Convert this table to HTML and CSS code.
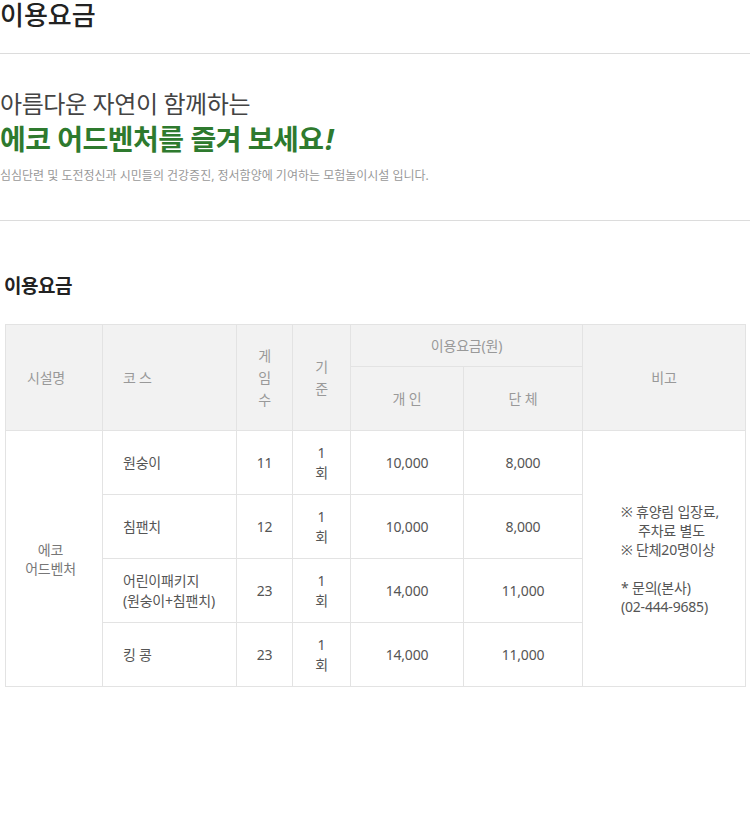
FILE: index.html
```html
<!DOCTYPE html>
<html lang="ko">
<head>
  <meta charset="UTF-8">
  <meta name="viewport" content="width=device-width, initial-scale=1.0">
  <title>이용요금</title>
  <link rel="stylesheet" href="styles.css">
</head>
<body>
  <div class="page">
    <h1 class="page-title">이용요금</h1>

    <div class="intro">
      <p class="intro-lead">아름다운 자연이 함께하는</p>
      <p class="intro-main">에코 어드벤처를 즐겨 보세요<span class="bang">!</span></p>
      <p class="intro-desc">심심단련 및 도전정신과 시민들의 건강증진, 정서함양에 기여하는 모험놀이시설 입니다.</p>
    </div>

    <h3 class="sub-title">이용요금</h3>

    <table class="fee-table">
      <colgroup>
        <col class="c-name">
        <col class="c-course">
        <col class="c-game">
        <col class="c-base">
        <col class="c-price">
        <col class="c-price2">
        <col class="c-note">
      </colgroup>
      <thead>
        <tr class="head-top">
          <th rowspan="2" class="th-name">시설명</th>
          <th rowspan="2" class="th-course">코 스</th>
          <th rowspan="2">게<br>임<br>수</th>
          <th rowspan="2">기<br>준</th>
          <th colspan="2">이용요금(원)</th>
          <th rowspan="2">비고</th>
        </tr>
        <tr class="head-bottom">
          <th>개 인</th>
          <th>단 체</th>
        </tr>
      </thead>
      <tbody>
        <tr>
          <td rowspan="4" class="td-name">에코<br>어드벤처</td>
          <td class="td-course">원숭이</td>
          <td>11</td>
          <td>1<br>회</td>
          <td>10,000</td>
          <td>8,000</td>
          <td rowspan="4" class="td-note">
            ※ 휴양림 입장료,<br>
            <span class="indent">주차료 별도</span><br>
            ※ 단체20명이상<br>
            <br>
            * 문의(본사)<br>
            (02-444-9685)
          </td>
        </tr>
        <tr>
          <td class="td-course">침팬치</td>
          <td>12</td>
          <td>1<br>회</td>
          <td>10,000</td>
          <td>8,000</td>
        </tr>
        <tr>
          <td class="td-course">어린이패키지<br>(원숭이+침팬치)</td>
          <td>23</td>
          <td>1<br>회</td>
          <td>14,000</td>
          <td>11,000</td>
        </tr>
        <tr>
          <td class="td-course">킹 콩</td>
          <td>23</td>
          <td>1<br>회</td>
          <td>14,000</td>
          <td>11,000</td>
        </tr>
      </tbody>
    </table>
  </div>
</body>
</html>
```

FILE: styles.css
```css
* {
  margin: 0;
  padding: 0;
}
body {
  background: #fff;
  font-family: "Noto Sans", "Noto Sans CJK KR", sans-serif;
  color: #555;
}
.page {
  width: 750px;
}
.page-title {
  font-size: 26px;
  line-height: 30px;
  font-weight: 500;
  color: #222;
  padding-bottom: 23px;
  border-bottom: 1px solid #dcdcdc;
}
.intro {
  padding: 33px 0 35px;
  border-bottom: 1px solid #dcdcdc;
}
.intro-lead {
  font-size: 24px;
  line-height: 34px;
  font-weight: 400;
  color: #444;
  letter-spacing: -0.4px;
}
.intro-main {
  font-size: 28px;
  line-height: 36px;
  font-weight: 700;
  color: #2e7a2e;
  letter-spacing: -0.5px;
}
.intro-main .bang {
  font-style: italic;
  margin-left: 2px;
}
.intro-desc {
  margin-top: 10px;
  font-size: 12px;
  line-height: 18px;
  color: #999;
}
.sub-title {
  margin: 53px 0 26px 4px;
  font-size: 19px;
  line-height: 24px;
  font-weight: 700;
  color: #222;
  letter-spacing: -0.5px;
}
.fee-table {
  margin-left: 5px;
  width: 740px;
  border-collapse: collapse;
  table-layout: fixed;
  font-size: 14px;
  letter-spacing: -0.2px;
}
.fee-table .c-name { width: 97px; }
.fee-table .c-course { width: 134px; }
.fee-table .c-game { width: 56px; }
.fee-table .c-base { width: 58px; }
.fee-table .c-price { width: 113px; }
.fee-table .c-price2 { width: 119px; }
.fee-table .c-note { width: 163px; }
.fee-table th,
.fee-table td {
  border: 1px solid #e3e3e3;
  text-align: center;
  vertical-align: middle;
}
.fee-table th {
  background: #f2f2f2;
  color: #999;
  font-weight: 400;
  line-height: 22px;
}
.fee-table .head-top {
  height: 42px;
}
.fee-table .head-bottom {
  height: 64px;
}
.fee-table .th-name {
  text-align: left;
  padding-left: 21px;
}
.fee-table .th-course {
  text-align: left;
  padding-left: 20px;
}
.fee-table td {
  height: 63px;
  line-height: 20px;
  color: #555;
}
.fee-table .td-name {
  color: #777;
  padding-right: 7px;
  line-height: 19px;
}
.fee-table .td-course {
  text-align: left;
  padding-left: 20px;
}
.fee-table .td-note {
  text-align: left;
  padding-left: 38px;
  line-height: 19px;
}
.fee-table .indent {
  padding-left: 17px;
}
```
